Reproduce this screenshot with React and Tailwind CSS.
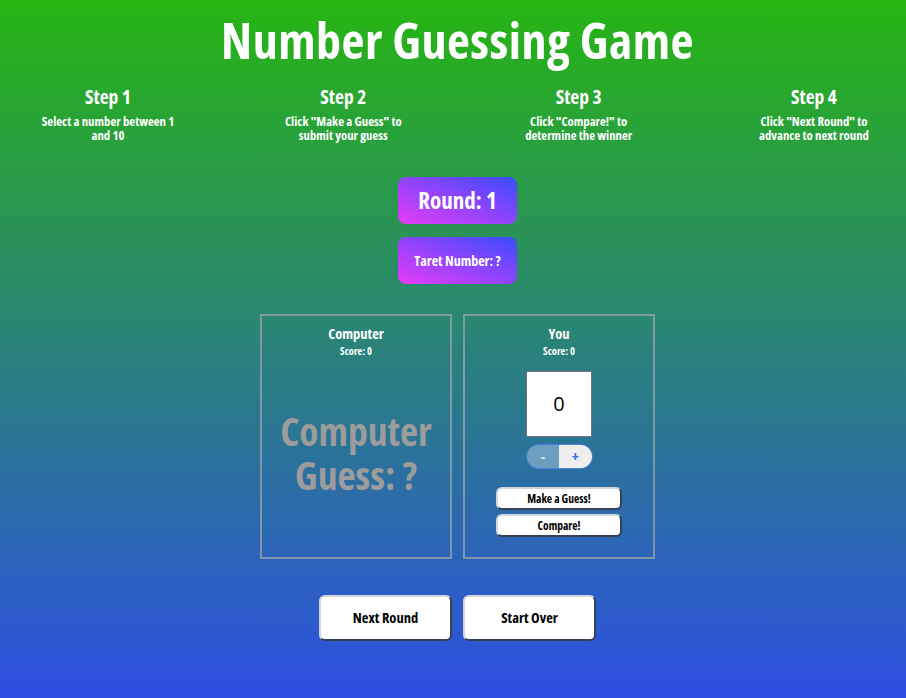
import React, { useState } from "react";

const steps = [
  { title: "Step 1", text: "Select a number between 1 and 10" },
  { title: "Step 2", text: 'Click "Make a Guess" to submit your guess' },
  { title: "Step 3", text: 'Click "Compare!" to determine the winner' },
  { title: "Step 4", text: 'Click "Next Round" to advance to next round' },
];

const btn =
  "bg-white rounded-md border-2 border-t-gray-300 border-l-gray-300 border-b-gray-700 border-r-gray-700 text-black font-bold";

const App = () => {
  const [guess, setGuess] = useState(0);

  return (
    <div className="w-full min-h-[698px] pl-[9px] font-['Open_Sans',sans-serif] font-stretch-75% bg-linear-to-b/srgb from-[#27b512] to-[#2d4fe3] text-white flex flex-col items-center">
      <h1 className="mt-[13px] text-[50px] leading-[54px] font-bold tracking-[0.5px]">
        Number Guessing Game
      </h1>

      <div className="w-full flex justify-between pl-[29px] pr-[22px] mt-[19px]">
        {steps.map((s) => (
          <div key={s.title} className="w-[140px] text-center">
            <h2 className="text-[19.5px] leading-[22px] font-bold">{s.title}</h2>
            <p className="mt-[6px] text-[12.75px] leading-[14px] font-bold">{s.text}</p>
          </div>
        ))}
      </div>

      <div className="mt-[35px] w-[119px] h-[47px] rounded-lg bg-linear-to-tr/srgb from-[#e63cf7] to-[#3a4cff] flex items-center justify-center">
        <span className="text-[23px] font-bold">Round: 1</span>
      </div>
      <div className="mt-[13px] w-[119px] h-[47px] rounded-lg bg-linear-to-tr/srgb from-[#e63cf7] to-[#3a4cff] flex items-center justify-center">
        <span className="text-[14px] font-bold">Taret Number: ?</span>
      </div>

      <div className="mt-[30px] flex gap-[11px]">
        <div className="w-[192px] h-[245px] border-2 border-[#94a3ab]/80 flex flex-col items-center pt-[8px]">
          <h3 className="text-[14.5px] leading-[20px] font-bold">Computer</h3>
          <p className="text-[10.5px] leading-[14px] font-bold">Score: 0</p>
          <div className="flex-1 flex items-center justify-center pb-[9px]">
            <p className="text-[39.5px] leading-[44px] font-bold text-[#9c9c9c] text-center">
              Computer Guess: ?
            </p>
          </div>
        </div>

        <div className="w-[192px] h-[245px] border-2 border-[#94a3ab]/80 flex flex-col items-center pt-[8px]">
          <h3 className="text-[14.5px] leading-[20px] font-bold">You</h3>
          <p className="text-[10.5px] leading-[14px] font-bold">Score: 0</p>
          <div className="mt-[13px] w-[66px] h-[66px] bg-white border border-gray-500 flex items-center justify-center">
            <span className="text-[20px] font-normal font-stretch-100% text-black">{guess}</span>
          </div>
          <div className="mt-[7px] w-[67px] h-[25px] rounded-full border border-[#4d7fe6] overflow-hidden flex">
            <button
              onClick={() => setGuess(Math.max(0, guess - 1))}
              className="w-1/2 h-full bg-[#6b9ebf] text-[#dde6ea] text-[15px] font-bold flex items-center justify-center"
            >
              -
            </button>
            <button
              onClick={() => setGuess(Math.min(10, guess + 1))}
              className="w-1/2 h-full bg-[#eeeeee] text-[#3d6fea] text-[15px] font-bold flex items-center justify-center"
            >
              +
            </button>
          </div>
          <button className={`mt-[18px] w-[126px] h-[23px] text-[11.5px] ${btn}`}>
            Make a Guess!
          </button>
          <button className={`mt-[4px] w-[126px] h-[23px] text-[11.5px] ${btn}`}>
            Compare!
          </button>
        </div>
      </div>

      <div className="mt-[36px] flex gap-[11px]">
        <button className={`w-[133px] h-[46px] text-[14.5px] ${btn}`}>Next Round</button>
        <button className={`w-[133px] h-[46px] text-[14.5px] ${btn}`}>Start Over</button>
      </div>
    </div>
  );
};

export default App;
